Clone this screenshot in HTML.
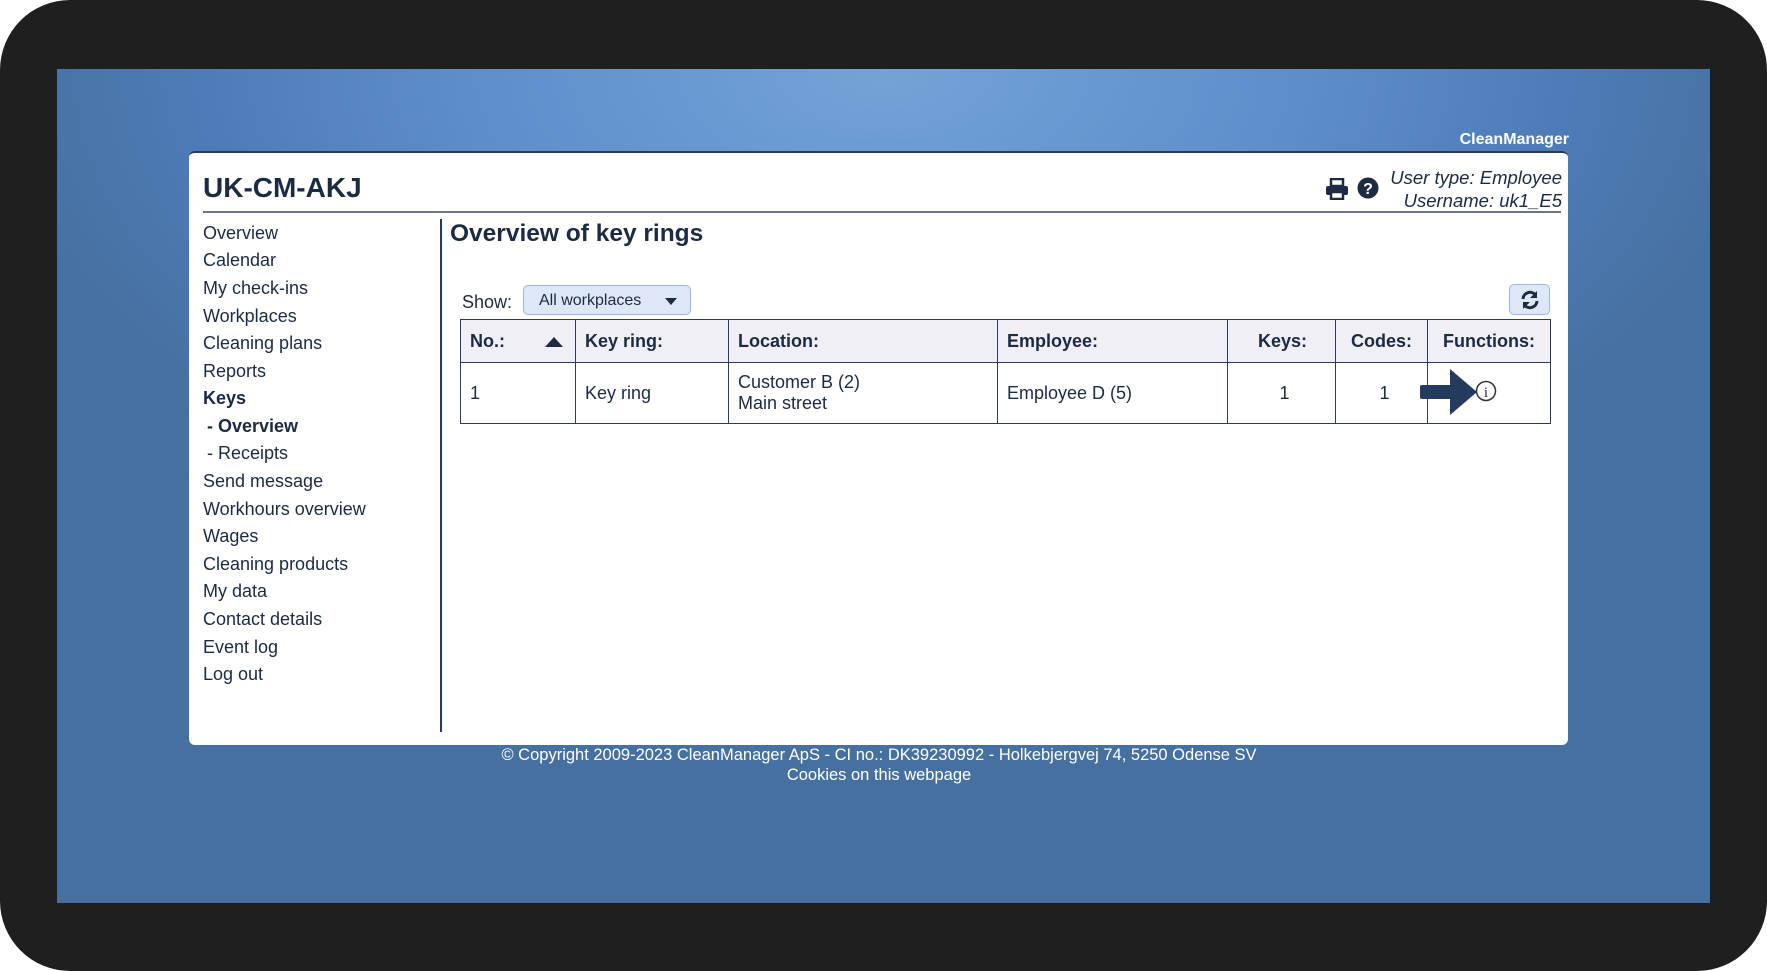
<!DOCTYPE html>
<html><head><style>
*{margin:0;padding:0;box-sizing:border-box}
body{width:1767px;height:971px;background:#fff;position:relative;overflow:hidden;font-family:"Liberation Sans",sans-serif;color:#1c2a44}
.frame{position:absolute;left:0;top:0;width:1767px;height:971px;border-radius:70px;background:#1f1f1f}
.bg{position:absolute;left:57px;top:69px;width:1653px;height:834px;background:radial-gradient(ellipse 900px 500px at 50% 0%,#73a3d8 0%,#5f8fcb 45%,#4e7cb9 75%,#46709f 100%)}
.cm{position:absolute;right:198px;top:131px;color:#fff;font-weight:bold;font-size:16px}
.panel{position:absolute;left:189px;top:151px;width:1379px;height:594px;background:#fff;border-radius:6px;border-top:2px solid #2a3c5a}
.t{position:absolute;white-space:nowrap}
.side div{position:absolute;left:14px;font-size:18px}
table{position:absolute;left:271px;top:166px;border-collapse:collapse;font-size:18px}
td,th{border:1.5px solid #2a3c5a;padding:0 9px}
th{background:#efeff5;height:43px;text-align:left;font-weight:bold}
td{height:61px}
</style></head><body>
<div class="frame"></div>
<div class="bg"></div>
<div class="cm">CleanManager</div>
<div class="panel">
 <div class="t" style="left:14px;top:19px;font-size:28px;font-weight:bold">UK-CM-AKJ</div>
 <svg class="t" style="left:1136px;top:25px" width="24" height="22" viewBox="0 0 24 22"><rect x="6" y="1" width="12" height="7" fill="none" stroke="#1c2a44" stroke-width="2.5"/><rect x="1" y="8" width="22" height="9" rx="2" fill="#1c2a44"/><rect x="6" y="14" width="12" height="7" fill="#fff" stroke="#1c2a44" stroke-width="2.5"/></svg>
 <svg class="t" style="left:1168px;top:24px" width="22" height="22" viewBox="0 0 22 22"><circle cx="11" cy="11" r="10.5" fill="#1c2a44"/><text x="11" y="17" text-anchor="middle" font-family="Liberation Sans" font-weight="bold" font-size="16" fill="#fff">?</text></svg>
 <div class="t" style="right:6px;top:13px;font-size:18.5px;font-style:italic;text-align:right;line-height:23px">User type: Employee<br>Username: uk1_E5</div>
 <div class="t" style="left:14px;top:58px;width:1358px;height:2px;background:#6a7585"></div>
 <div class="t" style="left:251px;top:66px;width:2px;height:513px;background:#2a3c5a"></div>
 <div class="side">
  <div style="top:70px">Overview</div><div style="top:97px">Calendar</div><div style="top:125px">My check-ins</div><div style="top:153px">Workplaces</div><div style="top:180px">Cleaning plans</div><div style="top:208px">Reports</div><div style="top:235px;font-weight:bold">Keys</div><div style="top:263px;font-weight:bold;left:18px">- Overview</div><div style="top:290px;left:18px">- Receipts</div><div style="top:318px">Send message</div><div style="top:346px">Workhours overview</div><div style="top:373px">Wages</div><div style="top:401px">Cleaning products</div><div style="top:428px">My data</div><div style="top:456px">Contact details</div><div style="top:484px">Event log</div><div style="top:511px">Log out</div>
 </div>
 <div class="t" style="left:261px;top:67px;font-size:24.5px;font-weight:bold">Overview of key rings</div>
 <div class="t" style="left:273px;top:139px;font-size:18px">Show:</div>
 <div class="t" style="left:334px;top:132px;width:168px;height:30px;background:#dde7f5;border:1.5px solid #9db6dd;border-radius:5px;font-size:16px;padding:6px 0 0 15px">All workplaces<span style="position:absolute;left:141px;top:12px;border-left:6px solid transparent;border-right:6px solid transparent;border-top:7px solid #1c2a44"></span></div>
 <div class="t" style="left:1320px;top:131px;width:41px;height:31px;background:#dde7f5;border:1.5px solid #9db6dd;border-radius:5px"><svg style="position:absolute;left:10px;top:5px" width="20" height="20" viewBox="0 0 20 20"><path d="M3 9a7 7 0 0 1 12.5-4" fill="none" stroke="#1c2a44" stroke-width="3"/><path d="M17 1v7h-7z" fill="#1c2a44"/><path d="M17 11a7 7 0 0 1-12.5 4" fill="none" stroke="#1c2a44" stroke-width="3"/><path d="M3 19v-7h7z" fill="#1c2a44"/></svg></div>
 <table>
  <tr><th style="width:115px;position:relative">No.:<span style="position:absolute;right:12px;top:17px;border-left:9px solid transparent;border-right:9px solid transparent;border-bottom:10px solid #1c2a44"></span></th><th style="width:153px">Key ring:</th><th style="width:269px">Location:</th><th style="width:230px">Employee:</th><th style="width:108px;text-align:right;padding-right:28px">Keys:</th><th style="width:92px;text-align:center">Codes:</th><th style="width:123px;text-align:center">Functions:</th></tr>
  <tr><td>1</td><td>Key ring</td><td style="line-height:21px">Customer B (2)<br>Main street</td><td>Employee D (5)</td><td style="text-align:center;padding-left:15px">1</td><td style="text-align:center;padding-left:15px">1</td><td style="position:relative"><svg style="position:absolute;left:-8px;top:3px" width="80" height="52" viewBox="0 0 80 52"><rect x="0" y="19" width="32" height="14" rx="2" fill="#253b5d"/><path d="M30 3L57 26L30 49z" fill="#253b5d"/><circle cx="66" cy="25" r="9.5" fill="#fff" stroke="#333" stroke-width="1.5"/><text x="66" y="31" text-anchor="middle" font-family="Liberation Serif" font-size="15" fill="#333">i</text></svg></td></tr>
 </table>
</div>
<div class="t" style="left:0;width:1758px;top:745px;text-align:center;color:#fff;font-size:16.5px;line-height:20px">© Copyright 2009-2023 CleanManager ApS - CI no.: DK39230992 - Holkebjergvej 74, 5250 Odense SV<br>Cookies on this webpage</div>
</body></html>
